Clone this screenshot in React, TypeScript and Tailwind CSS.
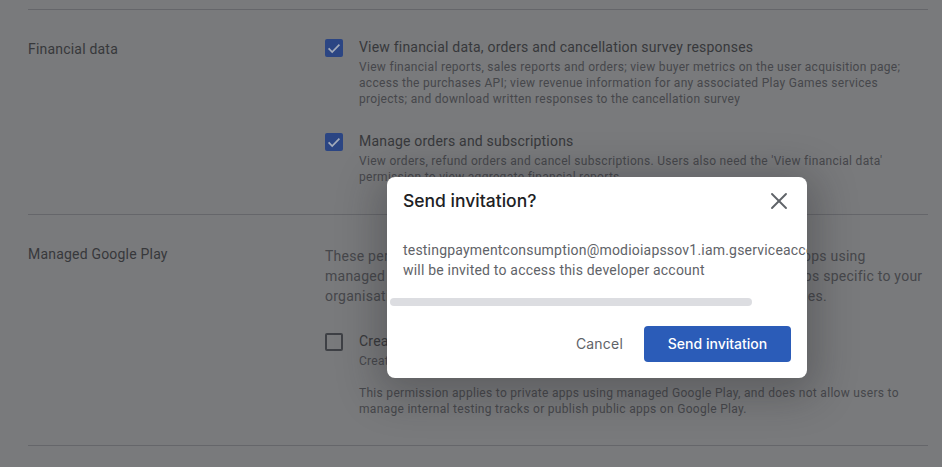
import { X } from "lucide-react";

function Box({ checked }: { checked?: boolean }) {
  if (!checked) {
    return <div className="size-[18px] mt-[2px] shrink-0 rounded-[2px] border-2 border-[#3e4045]" />;
  }
  return (
    <div className="size-[18px] mt-[2px] shrink-0 rounded-[2px] bg-[#2b4583] flex items-center justify-center">
      <svg viewBox="0 0 18 18" className="size-[18px]" fill="none" stroke="#a3abba" strokeWidth="1.7">
        <path d="M3.6 9.4l3.6 3.6 7.2-7.4" />
      </svg>
    </div>
  );
}

function Permission({ checked, title, children }: { checked?: boolean; title: string; children: React.ReactNode }) {
  return (
    <div className="flex gap-4">
      <Box checked={checked} />
      <div>
        <div className="text-sm leading-5 tracking-[0.2px] text-[#37383b]">{title}</div>
        <div className="text-xs leading-4 tracking-[0.3px] text-[#46474b] mt-[2px]">{children}</div>
      </div>
    </div>
  );
}

export default function App() {
  return (
    <div className="h-[467px] w-[942px] overflow-hidden bg-[#797a7c] relative font-['Roboto',sans-serif]">
      <div className="pt-[9px] pl-[28px] pr-[14px]">
        <section className="h-[205px] border-t border-[#65666a] pt-[27px] flex">
          <div className="w-[297px] text-sm leading-5 tracking-[0.2px] text-[#37383b] pt-[2px]">Financial data</div>
          <div className="flex-1 flex flex-col gap-[24px]">
            <Permission checked title="View financial data, orders and cancellation survey responses">
              View financial reports, sales reports and orders; view buyer metrics on the user acquisition page;
              <br />
              access the purchases API; view revenue information for any associated Play Games services
              <br />
              projects; and download written responses to the cancellation survey
            </Permission>
            <Permission checked title="Manage orders and subscriptions">
              View orders, refund orders and cancel subscriptions. Users also need the 'View financial data'
              <br />
              permission to view aggregate financial reports
            </Permission>
          </div>
        </section>
        <section className="h-[231px] border-t border-[#65666a] pt-[29px] flex">
          <div className="w-[297px] text-sm leading-5 tracking-[0.2px] text-[#37383b]">Managed Google Play</div>
          <div className="flex-1">
            <p className="text-sm leading-5 tracking-[0.25px] text-[#46474b] pt-[2px] whitespace-nowrap">
              These permissions are for all users who can publish and manage private apps using
              <br />
              managed Google Play, which lets you distribute and manage the private apps specific to your
              <br />
              organisation. Private apps are not available to any other people or companies.
            </p>
            <div className="mt-[25px]">
              <Permission title="Create and publish private apps">
                Create and publish private apps that are only available to your organisation.
                <br />
                <span className="block mt-4">
                  This permission applies to private apps using managed Google Play, and does not allow users to
                  <br />
                  manage internal testing tracks or publish public apps on Google Play.
                </span>
              </Permission>
            </div>
          </div>
        </section>
        <div className="border-t border-[#65666a]" />
      </div>

      <div className="absolute left-[387px] top-[177px] w-[420px] h-[201px] bg-white rounded-lg shadow-[0_8px_40px_10px_rgba(32,33,36,0.3)] overflow-hidden">
        <div className="flex items-center justify-between pl-4 pr-[14px] pt-[10px]">
          <h2 className="font-['Inter',sans-serif] text-[17.5px] leading-6 font-medium text-[#202124]">Send invitation?</h2>
          <X className="size-[28px] text-[#5f6368]" strokeWidth={1.6} />
        </div>
        <div className="pl-4 mt-[25px] text-sm leading-5 tracking-[0.2px] text-[#5f6368] whitespace-nowrap">
          testingpaymentconsumption@modioiapssov1.iam.gserviceaccount.com
          <br />
          will be invited to access this developer account
        </div>
        <div className="ml-[3px] mt-[18px] w-[362px] h-2 rounded bg-[#dcdde1]" />
        <div className="flex items-center justify-end gap-[21px] pr-4 mt-[20px]">
          <button className="text-sm tracking-[0.2px] text-[#5f6368] font-['Inter',sans-serif]">Cancel</button>
          <button className="h-9 w-[147px] rounded bg-[#2b5cb8] text-white text-sm font-medium font-['Inter',sans-serif]">Send invitation</button>
        </div>
      </div>
    </div>
  );
}
